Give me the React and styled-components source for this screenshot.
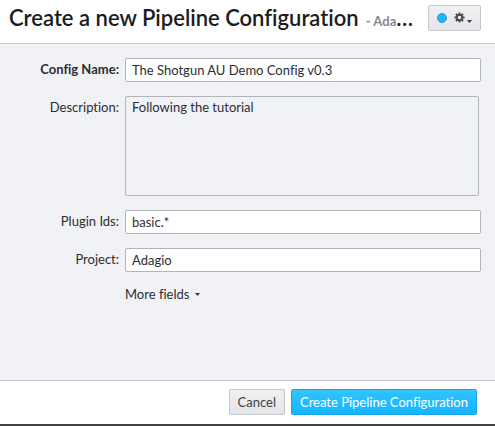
import React from "react";
import styled, { createGlobalStyle } from "styled-components";

const GlobalStyle = createGlobalStyle`
  *, *::before, *::after { box-sizing: border-box; }
  body {
    margin: 0;
    background: #ffffff;
    color: #2b2d33;
    font-family: Lato, "Open Sans", sans-serif;
    font-size: 13px;
    line-height: 18px;
    font-variant-ligatures: none;
  }
`;

const Dialog = styled.form`
  display: flex;
  flex-direction: column;
  min-height: 100vh;
  border-bottom: 2px solid #424247;
`;

const Header = styled.header`
  display: flex;
  align-items: flex-start;
  justify-content: space-between;
  gap: 12px;
  padding: 5px 14px 12px 9px;
  border-bottom: 1px solid #c9ccd2;
`;

const Title = styled.h1`
  flex: 1;
  min-width: 0;
  margin: 0;
  overflow: hidden;
  white-space: nowrap;
  text-overflow: ellipsis;
  font-size: 22px;
  font-weight: 600;
  line-height: 26px;
  color: #1b1c20;
`;

const Subtitle = styled.span`
  padding: 0 8px 0 4px;
  font-size: 13px;
  font-weight: 700;
  line-height: 13px;
  color: #85878e;
`;

const Button = styled.button`
  display: flex;
  align-items: center;
  justify-content: center;
  height: 26px;
  padding: 0 8px;
  font: inherit;
  font-variant-ligatures: none;
  white-space: nowrap;
  color: ${(p) => (p.$primary ? "#ffffff" : "#3d3f45")};
  background: ${(p) =>
    p.$primary
      ? "linear-gradient(#34c3ff, #12b5ff)"
      : "linear-gradient(#f1f1f4, #e4e5e9)"};
  border: 1px solid ${(p) => (p.$primary ? "#16a5e6" : "#c6c7cb")};
  border-radius: 2px;
`;

const StatusDot = styled.span`
  width: 10px;
  height: 10px;
  margin-right: 7px;
  background: #18b9ff;
  border: 1px solid #3c93bd;
  border-radius: 50%;
`;

const Fields = styled.div`
  flex: 1;
  display: grid;
  grid-template-columns: 119px 1fr;
  align-content: start;
  column-gap: 6px;
  row-gap: 14px;
  padding: 14px 14px 14px 0;
  background: #f1f2f6;
`;

const Label = styled.label`
  padding-top: 2px;
  text-align: right;
  font-weight: ${(p) => (p.$required ? 700 : 400)};
`;

const Input = styled.input`
  width: 100%;
  height: 24px;
  padding: 0 6px;
  font: inherit;
  font-variant-ligatures: none;
  color: inherit;
  background: #ffffff;
  border: 1px solid #b1b4ba;
  border-radius: 2px;
  outline: none;
`;

const TextArea = styled.textarea`
  display: block;
  width: calc(100% - 2px);
  height: 100px;
  padding: 1px 6px;
  font: inherit;
  font-variant-ligatures: none;
  color: inherit;
  background: transparent;
  border: 1px solid #b1b4ba;
  border-radius: 2px;
  outline: none;
  resize: none;
`;

const MoreFields = styled.button`
  grid-column: 2;
  justify-self: start;
  display: flex;
  align-items: center;
  gap: 6px;
  padding: 0;
  font: inherit;
  font-variant-ligatures: none;
  line-height: 16px;
  color: inherit;
  background: none;
  border: 0;
`;

const Footer = styled.footer`
  display: flex;
  justify-content: flex-end;
  gap: 6px;
  padding: 8px 18px 9px;
  border-top: 1px solid #c9c9ce;
`;

function Caret() {
  return (
    <svg width="5" height="3" viewBox="0 0 5 3" aria-hidden="true">
      <path d="M0 0h5L2.5 3z" fill="#37393e" />
    </svg>
  );
}

function Gear() {
  return (
    <svg width="11" height="11" viewBox="0 0 12 12" aria-hidden="true">
      <g fill="none" stroke="#4a4a4d" strokeWidth="2">
        <circle cx="6" cy="6" r="3" />
        <path d="M6 .5v2M6 9.500v2M.5 6h2M9.500 6h2M2 2l1.500 1.500M8.500 8.500l1.500 1.500M10 2l-1.500 1.500M3.500 8.500l-1.500 1.500" />
      </g>
    </svg>
  );
}

const MenuIcons = styled.span`
  display: flex;
  align-items: center;
  gap: 2px;
  padding-bottom: 2px;
`;

const MenuCaret = styled.span`
  display: flex;
  padding-top: 8px;
`;

export default function App() {
  return (
    <>
      <GlobalStyle />
      <Dialog onSubmit={(e) => e.preventDefault()}>
        <Header>
          <Title>
            Create a new Pipeline Configuration
            <Subtitle> - Adagio</Subtitle>
          </Title>
          <Button type="button" aria-label="Form settings">
            <StatusDot />
            <MenuIcons>
              <Gear />
              <MenuCaret>
                <Caret />
              </MenuCaret>
            </MenuIcons>
          </Button>
        </Header>
        <Fields>
          <Label htmlFor="name" $required>Config Name:</Label>
          <Input id="name" defaultValue="The Shotgun AU Demo Config v0.3" />
          <Label htmlFor="description">Description:</Label>
          <TextArea id="description" defaultValue="Following the tutorial" />
          <Label htmlFor="plugins">Plugin Ids:</Label>
          <Input id="plugins" defaultValue="basic.*" />
          <Label htmlFor="project">Project:</Label>
          <Input id="project" defaultValue="Adagio" />
          <MoreFields type="button">
            More fields
            <Caret />
          </MoreFields>
        </Fields>
        <Footer>
          <Button type="button">Cancel</Button>
          <Button type="submit" $primary>Create Pipeline Configuration</Button>
        </Footer>
      </Dialog>
    </>
  );
}
